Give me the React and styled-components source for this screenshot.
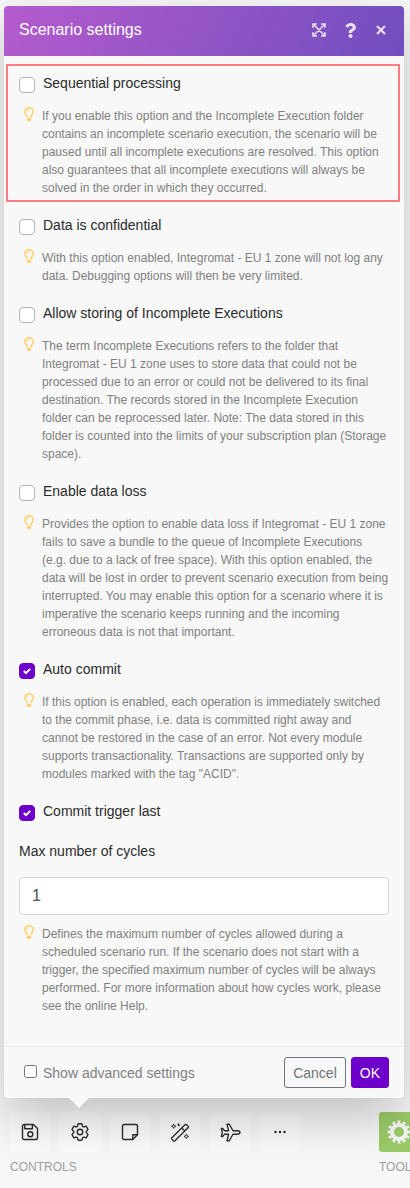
import React from "react";
import styled, { createGlobalStyle, css } from "styled-components";
import { FaRegLightbulb, FaQuestion } from "react-icons/fa";
import { HiOutlineCog6Tooth } from "react-icons/hi2";

const options = [
	{
		id: 'sequential',
		label: 'Sequential processing',
		highlighted: true,
		hint: 'If you enable this option and the Incomplete Execution folder contains an incomplete scenario execution, the scenario will be paused until all incomplete executions are resolved. This option also guarantees that all incomplete executions will always be solved in the order in which they occurred.',
	},
	{
		id: 'confidential',
		label: 'Data is confidential',
		hint: 'With this option enabled, Integromat - EU 1 zone will not log any data. Debugging options will then be very limited.',
	},
	{
		id: 'incomplete',
		label: 'Allow storing of Incomplete Executions',
		hint: 'The term Incomplete Executions refers to the folder that Integromat - EU 1 zone uses to store data that could not be processed due to an error or could not be delivered to its final destination. The records stored in the Incomplete Execution folder can be reprocessed later. Note: The data stored in this folder is counted into the limits of your subscription plan (Storage space).',
	},
	{
		id: 'dataloss',
		label: 'Enable data loss',
		hint: 'Provides the option to enable data loss if Integromat - EU 1 zone fails to save a bundle to the queue of Incomplete Executions (e.g.\u00a0due to a lack of free space). With this option enabled, the data will be lost in order to prevent scenario execution from being interrupted. You may enable this option for a scenario where it is imperative the scenario keeps running and the incoming erroneous data is not that important.',
	},
	{
		id: 'autocommit',
		label: 'Auto commit',
		checked: true,
		hint: 'If this option is enabled, each operation is immediately switched to the commit phase, i.e. data is committed right away and cannot be restored in the case of an error. Not every module supports transactionality. Transactions are supported only by modules marked with the tag "ACID".',
	},
	{ id: 'triggerlast', label: 'Commit trigger last', checked: true },
]

const tools = [
	{ name: 'Save', icon: <SaveIcon /> },
	{ name: 'Scenario settings', icon: <HiOutlineCog6Tooth size={22} />, active: true },
	{ name: 'Notes', icon: <NoteIcon /> },
	{ name: 'Auto-align', icon: <WandIcon /> },
	{ name: 'Explain flow', icon: <PlaneIcon /> },
	{ name: 'More', icon: <DotsIcon /> },
]

function ExpandIcon() {
	return (
		<svg width="14" height="14" viewBox="0 0 14 14" fill="none" stroke="currentColor" strokeWidth="1.5">
			<path d="M1 5V1h4M9 1h4v4M13 9v4H9M5 13H1V9M1.5 1.5l11 11M12.5 1.5l-11 11" />
		</svg>
	)
}

function CloseIcon() {
	return (
		<svg width="10" height="10" viewBox="0 0 10 10" fill="none" stroke="currentColor" strokeWidth="2.2">
			<path d="M1 1l8 8M9 1L1 9" />
		</svg>
	)
}

function CheckIcon() {
	return (
		<svg viewBox="0 0 8 8" fill="none" stroke="currentColor" strokeWidth="2">
			<path d="M0.8 4L3 6.2L7.2 1.9" />
		</svg>
	)
}

function SaveIcon() {
	return (
		<svg width="18" height="18" viewBox="0 0 18 18" fill="none" stroke="currentColor" strokeWidth="1.4" strokeLinejoin="round">
			<path d="M3 1.5h9.5l4 4V15a1.5 1.5 0 0 1-1.5 1.5H3A1.5 1.5 0 0 1 1.5 15V3A1.5 1.5 0 0 1 3 1.5z" />
			<path d="M3.8 1.5v4.2h7.6V1.5" />
			<circle cx="9.3" cy="11.3" r="2.5" />
		</svg>
	)
}

function NoteIcon() {
	return (
		<svg width="18" height="18" viewBox="0 0 18 18" fill="none" stroke="currentColor" strokeWidth="1.4" strokeLinejoin="round">
			<path d="M3 1.5h12A1.5 1.5 0 0 1 16.5 3v8.8l-4.7 4.7H3A1.5 1.5 0 0 1 1.5 15V3A1.5 1.5 0 0 1 3 1.5z" />
			<path d="M16.5 11.8h-4.7v4.7" />
		</svg>
	)
}

function WandIcon() {
	return (
		<svg width="20" height="20" viewBox="0 0 20 20" fill="none" stroke="currentColor" strokeWidth="1.3" strokeLinejoin="round">
			<path d="M1.9 15.7L14.9 2.7a1.2 1.2 0 0 1 1.7 0l1.4 1.4a1.2 1.2 0 0 1 0 1.7L5 18.8a1.2 1.2 0 0 1-1.7 0l-1.4-1.4a1.2 1.2 0 0 1 0-1.7z" />
			<path d="M11.7 5.9L14.8 9" />
			<path strokeWidth="1" d="M3.7 2l.7 1.5 1.5.7-1.5.7-.7 1.5-.7-1.5-1.5-.7 1.5-.7zM16.3 12.2l.7 1.5 1.5.7-1.5.7-.7 1.5-.7-1.5-1.5-.7 1.5-.7z" />
			<path fill="currentColor" stroke="none" d="M8.7 1l.6 1.3 1.3.6-1.3.6-.6 1.3-.6-1.3-1.3-.6 1.3-.6z" />
		</svg>
	)
}

function PlaneIcon() {
	return (
		<svg width="21" height="19" viewBox="-24 -24 624 560" fill="none" stroke="currentColor" strokeWidth="40" strokeLinejoin="round">
			<path d="M480 205H362L252 10H184L232 205H112L62 138H16L44 256L16 374H62L112 307H232L184 502H252L362 307H480C520 307 570 285 570 256S520 205 480 205Z" />
		</svg>
	)
}

function DotsIcon() {
	return (
		<svg width="12" height="4" viewBox="0 0 12 4" fill="currentColor">
			<circle cx="1.5" cy="2" r="1.2" />
			<circle cx="6" cy="2" r="1.2" />
			<circle cx="10.5" cy="2" r="1.2" />
		</svg>
	)
}

function GearIcon() {
	return (
		<svg width="24" height="24" viewBox="0 0 24 24" fill="none" stroke="currentColor">
			<circle cx="12" cy="12" r="7" strokeWidth="4" />
			<circle cx="12" cy="12" r="10" strokeWidth="3" pathLength="24" strokeDasharray="1.1 0.9" strokeDashoffset="0.55" />
		</svg>
	)
}

function Hint({ children }) {
	return (
		<HintRow>
			<FaRegLightbulb />
			<p>{children}</p>
		</HintRow>
	)
}

function App() {
	return (
		<>
		<GlobalStyle />
		<Page>
			<Panel>
				<Header>
					<h1>Scenario settings</h1>
					<HeaderButton aria-label="Expand"><ExpandIcon /></HeaderButton>
					<HeaderButton aria-label="Help"><FaQuestion size={15} /></HeaderButton>
					<HeaderButton aria-label="Close"><CloseIcon /></HeaderButton>
				</Header>
				<Body>
					{options.map((option) => (
						<Option key={option.id} $highlighted={option.highlighted}>
							<OptionLabel>
								<Tick>
									<input type="checkbox" defaultChecked={option.checked} />
									<CheckIcon />
								</Tick>
								<span>{option.label}</span>
							</OptionLabel>
							{option.hint ? <Hint>{option.hint}</Hint> : ''}
						</Option>
					))}
					<Field>
						<label htmlFor="cycles">Max number of cycles</label>
						<input id="cycles" type="text" inputMode="numeric" defaultValue="1" />
						<Hint>Defines the maximum number of cycles allowed during a scheduled scenario run. If the scenario does not start with a trigger, the specified maximum number of cycles will be always performed. For more information about how cycles work, please see the online Help.</Hint>
					</Field>
				</Body>
				<Footer>
					<Advanced>
						<input type="checkbox" />
						<span>Show advanced settings</span>
					</Advanced>
					<Button>Cancel</Button>
					<Button $primary>OK</Button>
				</Footer>
			</Panel>
			<Toolbar>
				<ToolGroup>
					<Tools>
						{tools.map((tool) => (
							<ToolButton key={tool.name} aria-label={tool.name} $active={tool.active}>
								{tool.icon}
							</ToolButton>
						))}
					</Tools>
					<span>CONTROLS</span>
				</ToolGroup>
				<ToolGroup>
					<Tools>
						<ToolButton aria-label="Flow control" $green><GearIcon /></ToolButton>
					</Tools>
					<span>TOOLS</span>
				</ToolGroup>
			</Toolbar>
		</Page>
		</>
	)
}

const GlobalStyle = createGlobalStyle`
	* {
		box-sizing: border-box;
	}

	body {
		margin: 0;
		background: #f7f7f7;
		font-family: "Liberation Sans", Arial, sans-serif;
	}

	h1, p {
		margin: 0;
		font-weight: normal;
	}

	button, input {
		font-family: inherit;
	}
`

const Page = styled.main`
	padding-top: 6px;
	overflow: hidden;
`

const Panel = styled.section`
	position: relative;
	margin: 0 6px 0 4px;
	border-radius: 4px;
	background: #f8f8f8;
	box-shadow: 0 20px 50px rgba(0, 0, 0, 0.22);

	/* arrow that points at the active tool */
	&::after {
		content: '';
		position: absolute;
		top: 100%;
		left: 65px;
		border: 10px solid transparent;
		border-top-color: #f8f8f8;
		border-bottom: 0;
	}
`

const Header = styled.header`
	display: flex;
	align-items: center;
	height: 50px;
	padding: 0 10px 2px 15px;
	border-radius: 4px 4px 0 0;
	background: linear-gradient(115deg, #b55bcd, #704ebf);
	color: #fff;

	h1 {
		flex: 1;
		font-size: 16px;
	}
`

const HeaderButton = styled.button`
	display: flex;
	align-items: center;
	justify-content: center;
	width: 26px;
	height: 26px;
	margin-left: 5px;
	padding: 0;
	border: 0;
	background: none;
	color: #e9dcf3;
	cursor: pointer;
`

const Body = styled.div`
	display: flex;
	flex-direction: column;
	gap: 18px;
	padding: 17px 15px 31px;
`

const Option = styled.div`
	position: relative;

	${props => props.$highlighted && css`
		&::after {
			content: '';
			position: absolute;
			inset: -9px -11px -5px -13px;
			border: 2px solid #fb7b7e;
			border-radius: 1px;
			pointer-events: none;
		}
	`}
`

const OptionLabel = styled.label`
	display: flex;
	gap: 8px;
	font-size: 14px;
	line-height: 20px;
	color: #2b2b2b;
	cursor: pointer;
`

const Tick = styled.span`
	display: grid;
	place-items: center;
	width: 16px;
	height: 16px;
	margin-top: 4px;

	input, svg {
		grid-area: 1 / 1;
	}

	input {
		appearance: none;
		width: 16px;
		height: 16px;
		margin: 0;
		border: 1px solid #adb5bd;
		border-radius: 4px;
		background: #fff;
	}

	input:checked {
		border-color: #6e00cc;
		background: #6e00cc;
	}

	svg {
		width: 8px;
		height: 8px;
		color: #fff;
		pointer-events: none;
	}
`

const HintRow = styled.div`
	display: flex;
	gap: 8px;
	margin: 14px 0 0 5px;
	font-size: 12px;
	line-height: 18px;
	color: #808080;

	svg {
		flex: none;
		width: 10px;
		height: 14px;
		color: #ffcb5c;
	}
`

const Field = styled.div`
	display: flex;
	flex-direction: column;
	padding-top: 2px;

	label {
		font-size: 14px;
		line-height: 20px;
		color: #2b2b2b;
	}

	input {
		width: 100%;
		height: 38px;
		margin-top: 16px;
		padding: 0 12px;
		border: 1px solid #d2d4d6;
		border-radius: 4px;
		background: #fff;
		font-size: 16px;
		color: #495057;
	}

	${HintRow} {
		margin-top: 10px;
	}
`

const Footer = styled.footer`
	display: flex;
	align-items: center;
	gap: 5px;
	padding: 10px 15px;
	border-top: 1px solid #ececec;
`

const Advanced = styled.label`
	display: flex;
	flex: 1;
	gap: 6px;
	padding-left: 5px;
	font-size: 14px;
	line-height: 20px;
	color: #808080;

	input {
		width: 13px;
		height: 13px;
		margin: 2px 0 0;
	}
`

const Button = styled.button`
	height: 31px;
	padding: 0 8px;
	border: 1px solid ${props => props.$primary ? '#6e00cc' : '#6c757d'};
	border-radius: 3px;
	background: ${props => props.$primary ? '#6e00cc' : 'transparent'};
	font-size: 14px;
	color: ${props => props.$primary ? '#fff' : '#6c757d'};
	cursor: pointer;
`

const Toolbar = styled.nav`
	display: flex;
	gap: 79px;
	padding: 14px 10px;
`

const ToolGroup = styled.div`
	flex: none;

	> span {
		display: block;
		margin-top: 7px;
		font-size: 12px;
		line-height: 16px;
		color: #a0a0a0;
	}
`

const Tools = styled.div`
	display: flex;
	gap: 10px;
`

const ToolButton = styled.button`
	display: flex;
	align-items: center;
	justify-content: center;
	width: 40px;
	height: 40px;
	padding: 0;
	border: 0;
	border-radius: 3px;
	background: ${props => props.$green ? '#9ccb68' : 'rgba(255, 255, 255, 0.45)'};
	color: ${props => props.$green ? '#f7f7f7' : '#2b2b2b'};
	cursor: pointer;

	${props => props.$active && css`
		background: rgba(255, 255, 255, 0.65);
		box-shadow: 0 0 0 1px rgba(255, 255, 255, 0.65);
	`}
`

export default App
